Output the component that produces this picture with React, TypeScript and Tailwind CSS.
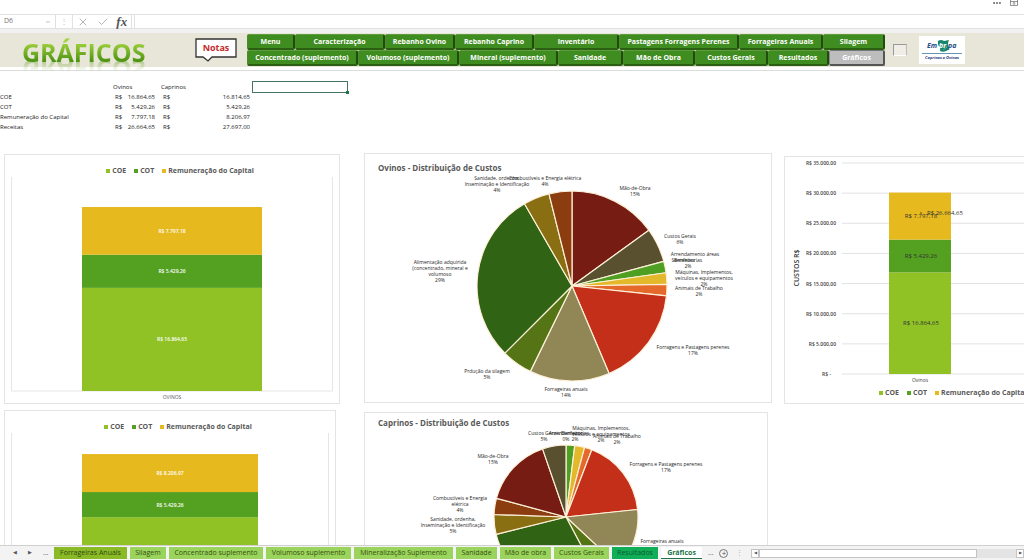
import { Check, ChevronDown, Ellipsis, X } from "lucide-react";

interface Segment {
  name: string;
  value: number;
  color: string;
}

interface Slice {
  end: number;
  color: string;
}

interface PieLabel {
  x: number;
  y: number;
  lines: string[];
}

interface TabItem {
  label: string;
  width: string;
}

const navRows: TabItem[][] = [
  [
    { label: "Menu", width: "w-[48px]" },
    { label: "Caracterização", width: "w-[90px]" },
    { label: "Rebanho Ovino", width: "w-[70px]" },
    { label: "Rebanho Caprino", width: "w-[79px]" },
    { label: "Inventário", width: "w-[85px]" },
    { label: "Pastagens Forragens Perenes", width: "w-[120px]" },
    { label: "Forrageiras Anuais", width: "w-[84px]" },
    { label: "Silagem", width: "w-[62px]" },
  ],
  [
    { label: "Concentrado (suplemento)", width: "w-[111px]" },
    { label: "Volumoso (suplemento)", width: "w-[101px]" },
    { label: "Mineral (suplemento)", width: "w-[99px]" },
    { label: "Sanidade", width: "w-[65px]" },
    { label: "Mão de Obra", width: "w-[72px]" },
    { label: "Custos Gerais", width: "w-[73px]" },
    { label: "Resultados", width: "w-[61px]" },
    { label: "Gráficos", width: "w-[56px]" },
  ],
];

const sheetTabs: TabItem[] = [
  { label: "Forrageiras Anuais", width: "w-[73px]" },
  { label: "Silagem", width: "w-[36px]" },
  { label: "Concentrado suplemento", width: "w-[94px]" },
  { label: "Volumoso suplemento", width: "w-[85px]" },
  { label: "Mineralização Suplemento", width: "w-[99px]" },
  { label: "Sanidade", width: "w-[41px]" },
  { label: "Mão de obra", width: "w-[51px]" },
  { label: "Custos Gerais", width: "w-[55px]" },
  { label: "Resultados", width: "w-[46px]" },
  { label: "Gráficos", width: "w-[41px]" },
];

const summary = [
  ["COE", "16.864,65", "16.814,65"],
  ["COT", "5.429,26", "5.429,26"],
  ["Remuneração do Capital", "7.797,18", "8.206,97"],
  ["Receitas", "26.664,65", "27.697,00"],
];

const ovinos: Segment[] = [
  { name: "COE", value: 16864.65, color: "#90c226" },
  { name: "COT", value: 5429.26, color: "#54a021" },
  { name: "Remuneração do Capital", value: 7797.18, color: "#e6b91e" },
];

const caprinos: Segment[] = [
  { name: "COE", value: 16814.65, color: "#90c226" },
  { name: "COT", value: 5429.26, color: "#54a021" },
  { name: "Remuneração do Capital", value: 8206.97, color: "#e6b91e" },
];

// slice ends are in degrees, clockwise from the top
const ovinosSlices: Slice[] = [
  { end: 54, color: "#761c12" },
  { end: 75, color: "#58502f" },
  { end: 82, color: "#4e9f22" },
  { end: 89, color: "#e3b92b" },
  { end: 96, color: "#e5692a" },
  { end: 157, color: "#c42f1a" },
  { end: 206, color: "#918655" },
  { end: 225, color: "#547416" },
  { end: 330, color: "#316314" },
  { end: 346, color: "#8a6e12" },
  { end: 360, color: "#8b3d10" },
];

const caprinosSlices: Slice[] = [
  { end: 7, color: "#4e9f22" },
  { end: 15, color: "#e3b92b" },
  { end: 21, color: "#e5692a" },
  { end: 84, color: "#c42f1a" },
  { end: 133, color: "#918655" },
  { end: 152, color: "#547416" },
  { end: 256, color: "#316314" },
  { end: 272, color: "#8a6e12" },
  { end: 285, color: "#8b3d10" },
  { end: 341, color: "#761c12" },
  { end: 360, color: "#58502f" },
];

const ovinosLabels: PieLabel[] = [
  { x: 270, y: 16, lines: ["Mão-de-Obra", "15%"] },
  { x: 315, y: 64, lines: ["Custos Gerais", "6%"] },
  { x: 330, y: 82, lines: ["Arrendamento áreas"] },
  { x: 323, y: 88, lines: ["Benfeitorias", "2%"] },
  { x: 318, y: 88, lines: ["Sementes"] },
  { x: 339, y: 100, lines: ["Máquinas, Implementos,", "veículos e equipamentos", "2%"] },
  { x: 334, y: 116, lines: ["Animais de Trabalho", "2%"] },
  { x: 328, y: 175, lines: ["Forragens e Pastagens perenes", "17%"] },
  { x: 201, y: 217, lines: ["Forrageiras anuais", "14%"] },
  { x: 122, y: 199, lines: ["Prdução da silagem", "5%"] },
  { x: 75, y: 90, lines: ["Alimentação adquirida", "(concentrado, mineral e", "volumoso", "29%"] },
  { x: 132, y: 6, lines: ["Sanidade, ordenha,", "Inseminação e Identificação", "4%"] },
  { x: 180, y: 6, lines: ["Combustíveis e Energia elétrica", "4%"] },
];

const caprinosLabels: PieLabel[] = [
  { x: 179, y: 6, lines: ["Custos Gerais", "5%"] },
  { x: 201, y: 6, lines: ["Arrendamento", "0%"] },
  { x: 210, y: 6, lines: ["Benfeitorias", "2%"] },
  { x: 236, y: 1, lines: ["Máquinas, Implementos,", "veículos e equipamentos", "2%"] },
  { x: 252, y: 9, lines: ["Animais de Trabalho", "2%"] },
  { x: 301, y: 37, lines: ["Forragens e Pastagens perenes", "17%"] },
  { x: 297, y: 114, lines: ["Forrageiras anuais", "14%"] },
  { x: 128, y: 29, lines: ["Mão-de-Obra", "15%"] },
  { x: 95, y: 71, lines: ["Combustíveis e Energia", "elétrica", "4%"] },
  { x: 88, y: 92, lines: ["Sanidade, ordenha,", "Inseminação e Identificação", "5%"] },
];

const AXIS_MAX = 35000;

const money = (value: number) =>
  "R$ " + value.toLocaleString("pt-BR", { minimumFractionDigits: 2, maximumFractionDigits: 2 });

function stack(segments: Segment[], plotHeight: number) {
  let base = plotHeight;
  return segments.map((s) => {
    const height = (s.value / AXIS_MAX) * plotHeight;
    base -= height;
    return { ...s, y: base, height };
  });
}

function slicePath(cx: number, cy: number, r: number, from: number, to: number) {
  const point = (deg: number) => {
    const rad = (deg * Math.PI) / 180;
    return `${cx + r * Math.sin(rad)} ${cy - r * Math.cos(rad)}`;
  };
  return `M${cx} ${cy}L${point(from)}A${r} ${r} 0 ${to - from > 180 ? 1 : 0} 1 ${point(to)}Z`;
}

function Legend({ className }: { className: string }) {
  return (
    <ul className={`flex text-[7px] leading-3 font-bold whitespace-nowrap text-[#595959] ${className}`}>
      {ovinos.map((s) => (
        <li key={s.name} className="flex items-center gap-0.5">
          <span className="size-1" style={{ backgroundColor: s.color }} />
          {s.name}
        </li>
      ))}
    </ul>
  );
}

interface ColumnCardProps {
  name: string;
  data: Segment[];
  width: number;
  plotHeight: number;
  className?: string;
}

function ColumnCard({ name, data, width, plotHeight, className = "" }: ColumnCardProps) {
  const barWidth = width - 154;
  const middle = 77 + barWidth / 2;
  return (
    <section aria-label={name} className={`border border-[#e4e4e4] bg-white pt-2.5 ${className}`}>
      <Legend className="justify-center gap-2 pl-4" />
      <svg viewBox={`0 0 ${width} ${plotHeight + 12}`} className="block w-full">
        <path d={`M6.5 0V${plotHeight}H${width - 6.5}V0`} fill="none" stroke="#e6e6e6" />
        {stack(data, plotHeight).map((s) => (
          <g key={s.name}>
            <rect x="77" y={s.y} width={barWidth} height={s.height} fill={s.color} />
            <text x={middle} y={s.y + s.height / 2 + 2} textAnchor="middle" fontSize="5" fontWeight="600" fill="#fff">
              {money(s.value)}
            </text>
          </g>
        ))}
        <text x={middle} y={plotHeight + 8} textAnchor="middle" fontSize="5" fill="#595959">
          {name.toUpperCase()}
        </text>
      </svg>
    </section>
  );
}

interface PieCardProps {
  title: string;
  className: string;
  width: number;
  cx: number;
  cy: number;
  r: number;
  slices: Slice[];
  labels: PieLabel[];
}

function PieCard({ title, className, width, cx, cy, r, slices, labels }: PieCardProps) {
  return (
    <section className={`border border-[#e4e4e4] bg-white ${className}`}>
      <h2 className="pl-[13px] text-[8px] leading-3 font-bold text-[#595959]">{title}</h2>
      <svg viewBox={`0 0 ${width} 228`} className="block w-full overflow-visible">
        {slices.map((s, i) => (
          <path
            key={s.end}
            d={slicePath(cx, cy, r, i ? slices[i - 1].end : 0, s.end)}
            fill={s.color}
            stroke="#fdf0d8"
            strokeWidth="1.2"
            strokeLinejoin="round"
          />
        ))}
        {labels.map((l) => (
          <text key={l.lines[0]} textAnchor="middle" fontSize="5" fontWeight="500" fill="#262626">
            {l.lines.map((line, i) => (
              <tspan key={line} x={l.x} y={l.y + i * 6}>
                {line}
              </tspan>
            ))}
          </text>
        ))}
      </svg>
    </section>
  );
}

function CostCard() {
  const ticks = [35000, 30000, 25000, 20000, 15000, 10000, 5000, 0];
  return (
    <section aria-label="Custos" className="mt-[3px] overflow-hidden border border-r-0 border-[#e4e4e4] bg-white">
      <svg viewBox="0 0 239 230" className="block w-full">
        <text transform="translate(14 111) rotate(-90)" textAnchor="middle" fontSize="7" fontWeight="600" fill="#404040">
          CUSTOS R$
        </text>
        <g transform="translate(0 6)">
          {ticks.map((t) => {
            const y = 211 - (t / AXIS_MAX) * 211;
            return (
              <g key={t}>
                <path d={`M57 ${y}H239`} stroke="#e2e2e2" />
                <text x={t ? 51 : 46} y={y + 2} textAnchor="end" fontSize="5" fontWeight="600" fill="#404040">
                  {t ? money(t) : "R$ -"}
                </text>
              </g>
            );
          })}
          {stack(ovinos, 211).map((s) => (
            <g key={s.name}>
              <rect x="104" y={s.y} width="62" height={s.height} fill={s.color} />
              <text x="136" y={s.y + s.height / 2 + 2} textAnchor="middle" fontSize="6" fill="#333">
                {money(s.value)}
              </text>
            </g>
          ))}
          <circle cx="136" cy="50" r="1" fill="#8a6e12" />
          <text x="142" y="52" fontSize="6" fill="#333">
            {money(26664.65)}
          </text>
          <text x="135" y="219" textAnchor="middle" fontSize="5" fill="#404040">
            Ovinos
          </text>
        </g>
      </svg>
      <Legend className="gap-2 pb-1 pl-[94px]" />
    </section>
  );
}

function FormulaBar() {
  return (
    <div className="flex h-[15px] shrink-0 items-stretch border-t border-b border-[#e1e1e1] text-[#777]">
      <button className="flex w-14 items-center justify-between border-r border-[#e1e1e1] px-1 text-[7px]">
        D6
        <ChevronDown className="size-1.5" />
      </button>
      <span className="w-4 text-center text-[8px] leading-3 text-[#bbb]">⋮</span>
      <div className="flex w-[60px] items-center justify-around border-x border-[#e1e1e1]">
        <button aria-label="Cancelar">
          <X className="size-3 text-[#b5b5b5]" />
        </button>
        <button aria-label="Inserir">
          <Check className="size-3 text-[#b5b5b5]" />
        </button>
        <button aria-label="Inserir função" className="font-['Liberation_Serif',serif] text-[13px] leading-3 font-bold text-[#555] italic">
          fx
        </button>
      </div>
      <input aria-label="Fórmula" className="ml-0.5 min-w-0 flex-1 border-l border-[#e1e1e1] text-[8px] outline-none" />
    </div>
  );
}

function EmbrapaLogo() {
  return (
    <svg viewBox="0 0 46 28" className="h-7 w-[46px]" role="img" aria-label="Embrapa Caprinos e Ovinos">
      <rect width="46" height="28" fill="#fff" />
      <path d="M19 5Q22 3 25 5L30 4Q28 8 30 11L29 14Q25 17 21 15Q22 11 19 9Z" fill="#16856b" />
      <path d="M19 9L24 8L28 11L24 14" fill="none" stroke="#7fc4a8" strokeWidth="0.6" />
      <text x="8" y="12" fontSize="7" fontWeight="700" fontStyle="italic" fill="#1d4e88">
        Em
      </text>
      <text x="20" y="12" fontSize="7" fontWeight="700" fontStyle="italic" fill="#fff">
        br
      </text>
      <text x="29" y="12" fontSize="7" fontWeight="700" fontStyle="italic" fill="#1d4e88">
        pa
      </text>
      <path d="M3 17.500H43" stroke="#3b7f9e" strokeWidth="0.8" />
      <text x="23" y="23" textAnchor="middle" fontSize="4" fontWeight="700" fontStyle="italic" fill="#263f7d">
        Caprinos e Ovinos
      </text>
    </svg>
  );
}

function Banner() {
  return (
    <header className="flex h-[34px] shrink-0 items-center bg-[#e8e6d9]">
      <h1 className="w-[195px] shrink-0 bg-gradient-to-b from-[#9fd23c] from-30% to-[#4f9412] to-80% bg-clip-text pt-1 pl-[22px] font-['Open_Sans',sans-serif] text-[25px] leading-8 font-bold text-transparent [-webkit-box-reflect:below_-14px_linear-gradient(transparent_50%,rgba(0,0,0,0.6))]">
        GRÁFICOS
      </h1>
      <button className="relative h-[26px] w-[42px] shrink-0">
        <svg viewBox="0 0 42 26" className="absolute inset-0">
          <path d="M1 2H41V20H17L13 24L8 20H1Z" fill="#fff" stroke="#333" strokeWidth="1.300" />
        </svg>
        <span className="relative block pb-1 text-[9px] leading-4 font-bold text-[#c42b2b]">Notas</span>
      </button>
      <nav className="ml-2.5 flex shrink-0 flex-col">
        {navRows.map((row) => (
          <div key={row[0].label} className="flex">
            {row.map(({ label, width }) => (
              <button
                key={label}
                className={`${width} h-4 rounded-xs border border-r-2 border-b-2 text-[7px] leading-3 font-bold whitespace-nowrap text-white ${
                  label === "Gráficos"
                    ? "border-t-[#777] border-r-[#555] border-b-[#555] border-l-[#888] bg-[#bdbdbd]"
                    : "border-t-[#5f9d3c] border-r-[#214d0c] border-b-[#2b5f12] border-l-[#4c8a2a] bg-[#3f8c20]"
                }`}
              >
                {label}
              </button>
            ))}
          </div>
        ))}
      </nav>
      <input
        type="checkbox"
        aria-label="Exibir"
        className="ml-2 h-3 w-3.5 shrink-0 appearance-none border border-t-[#999] border-r-[#bbb] border-b-white border-l-[#999] bg-[#efeee6]"
      />
      <div className="ml-3 shrink-0">
        <EmbrapaLogo />
      </div>
    </header>
  );
}

function Summary() {
  return (
    <div className="flex items-start pt-2.5">
      <table className="mt-px w-[252px] table-fixed border-collapse text-[6px] leading-[10px] font-medium text-[#222]">
        <thead>
          <tr>
            <th className="w-[113px]" />
            <th className="w-[46px] text-left font-medium">Ovinos</th>
            <th className="pl-0.5 text-left font-medium">Caprinos</th>
          </tr>
        </thead>
        <tbody>
          {summary.map(([name, first, second]) => (
            <tr key={name}>
              <td className="whitespace-nowrap">{name}</td>
              <td>
                <div className="flex justify-between pr-1 pl-0.5">
                  <span>R$</span>
                  <span>{first}</span>
                </div>
              </td>
              <td>
                <div className="flex justify-between pr-0.5 pl-1">
                  <span>R$</span>
                  <span>{second}</span>
                </div>
              </td>
            </tr>
          ))}
        </tbody>
      </table>
      <div className="relative h-3 w-24 border border-[#44745f]">
        <span className="absolute -right-0.5 -bottom-0.5 size-[3px] bg-[#217346]" />
      </div>
    </div>
  );
}

function tabColor(label: string) {
  if (label === "Gráficos") return "bg-white font-bold text-[#217346] border-b border-[#217346]";
  if (label === "Resultados") return "bg-[#0fae57] font-medium text-[#0b5a2e]";
  if (label === "Forrageiras Anuais") return "bg-[#8abb27] font-medium text-[#33470f]";
  return "bg-[#9bd45c] font-medium text-[#33500f]";
}

function SheetTabs() {
  return (
    <footer className="flex h-[15px] shrink-0 items-center border-t border-[#d0d0d0] bg-[#f3f3f3] text-[7px] text-[#555]">
      <div className="flex w-[54px] shrink-0 items-center justify-around pl-2">
        <button aria-label="Anterior" className="text-[5px]">◀</button>
        <button aria-label="Próxima" className="text-[5px]">▶</button>
        <button aria-label="Mais planilhas">…</button>
      </div>
      <div className="flex shrink-0 gap-[3px]">
        {sheetTabs.map(({ label, width }) => (
          <button key={label} className={`${width} h-3 leading-3 whitespace-nowrap ${tabColor(label)}`}>
            {label}
          </button>
        ))}
      </div>
      <span className="ml-1.5">…</span>
      <button
        aria-label="Nova planilha"
        className="ml-1.5 flex size-[9px] shrink-0 items-center justify-center rounded-full border border-[#777] text-[8px] leading-none"
      >
        +
      </button>
      <span className="mx-2 text-[#aaa]">⋮</span>
      <div className="flex h-[9px] flex-1 bg-[#e4e4e4] text-[4px]">
        <button aria-label="Rolar à esquerda" className="w-2 border border-[#c4c4c4] bg-white">◀</button>
        <div className="w-4/5 border border-[#c4c4c4] bg-white" />
        <button aria-label="Rolar à direita" className="ml-auto w-2 border border-[#c4c4c4] bg-white">▶</button>
      </div>
    </footer>
  );
}

export default function App() {
  return (
    <div className="flex h-screen flex-col overflow-hidden bg-white font-['Open_Sans','Noto_Sans',sans-serif]">
      <div className="flex h-3.5 shrink-0 items-start justify-end gap-2 pr-1.5 text-[#666]">
        <button aria-label="Mais opções">
          <Ellipsis className="h-1.5 w-2.5" preserveAspectRatio="xMidYMid slice" strokeWidth={3} />
        </button>
        <button aria-label="Opções da faixa">
          <svg viewBox="0 0 8 6" className="h-1.5 w-2">
            <path d="M0.500 0V5.500H7.500V0M0 1.500H8M4 5V2.500M2.800 3.500L4 2.300L5.200 3.500" fill="none" stroke="#777" strokeWidth="0.8" />
          </svg>
        </button>
      </div>
      <FormulaBar />
      <div className="h-1 shrink-0 bg-[#f1f1f1]" />
      <Banner />
      <div className="h-1 shrink-0 border-b border-[#dcdcdc]" />
      <main className="min-h-0 flex-1 overflow-hidden">
        <Summary />
        <div className="mt-[21px] grid grid-cols-[360fr_420fr_240fr] items-start pl-1">
          <div className="flex flex-col gap-1.5 pt-px pr-6">
            <ColumnCard name="Ovinos" data={ovinos} width={334} plotHeight={214} />
            <ColumnCard name="Caprinos" data={caprinos} width={330} plotHeight={162} className="mr-1" />
          </div>
          <div className="flex flex-col gap-[9px] pr-3">
            <PieCard
              title="Ovinos - Distribuição de Custos"
              className="pt-2"
              width={406}
              cx={207}
              cy={112}
              r={95}
              slices={ovinosSlices}
              labels={ovinosLabels}
            />
            <PieCard
              title="Caprinos - Distribuição de Custos"
              className="mr-1 pt-1"
              width={402}
              cx={201}
              cy={88}
              r={72}
              slices={caprinosSlices}
              labels={caprinosLabels}
            />
          </div>
          <CostCard />
        </div>
      </main>
      <SheetTabs />
    </div>
  );
}
